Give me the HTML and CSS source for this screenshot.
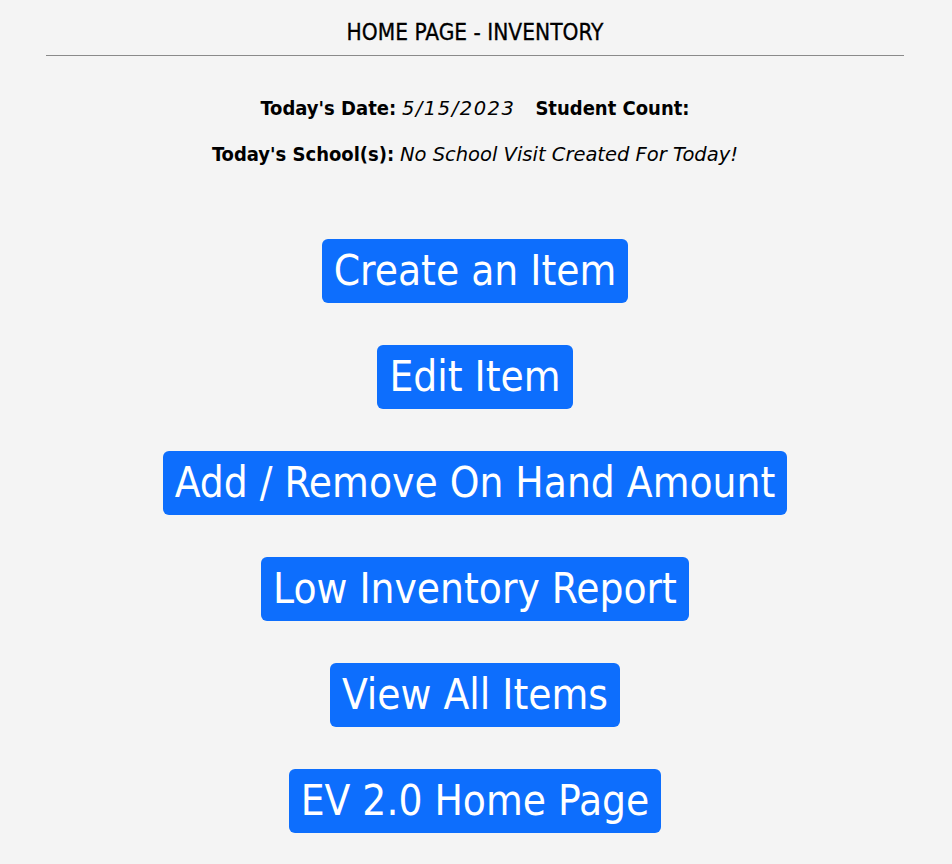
FILE: index.html
```html
<!DOCTYPE html>
<html lang="en">
<head>
<meta charset="utf-8">
<title>Home Page - Inventory</title>
<link rel="stylesheet" href="styles.css">
</head>
<body>
<main class="page">
  <header class="page-header">
    <h1 class="page-title">HOME PAGE - INVENTORY</h1>
  </header>
  <section class="info">
    <p class="info-line"><strong>Today's Date:</strong> <em class="date">5/15/2023</em><span class="spacer"></span><strong>Student Count:</strong></p>
    <p class="info-line"><strong>Today's School(s):</strong> <em>No School Visit Created For Today!</em></p>
  </section>
  <nav class="actions">
    <a class="btn" href="#">Create an Item</a>
    <a class="btn" href="#">Edit Item</a>
    <a class="btn" href="#">Add / Remove On Hand Amount</a>
    <a class="btn" href="#">Low Inventory Report</a>
    <a class="btn" href="#">View All Items</a>
    <a class="btn" href="#">EV 2.0 Home Page</a>
  </nav>
</main>
</body>
</html>
```

FILE: styles.css
```css
html, body {
  margin: 0;
  padding: 0;
  background: #f4f4f4;
}
body {
  font-family: "DejaVu Sans Condensed", "Liberation Sans", sans-serif;
  color: #000;
}
.page {
  margin: 0 48px 0 46px;
  display: flex;
  flex-direction: column;
  align-items: center;
}
.page-header {
  width: 100%;
  border-bottom: 1px solid #8a8a8a;
  padding-top: 20px;
  padding-bottom: 11px;
  text-align: center;
}
.page-title {
  margin: 0;
  font-size: 22.5px;
  font-weight: normal;
  line-height: 24px;
  -webkit-text-stroke: 0.3px #000;
}
.info {
  margin-top: 39px;
  text-align: center;
}
.info-line {
  margin: 0 0 19px;
  font-size: 20px;
  line-height: 26px;
}
.info-line strong { font-weight: bold; }
.info-line em {
  font-family: "DejaVu Sans", sans-serif;
  font-style: italic;
  font-size: 19.5px;
}
.info-line .date { letter-spacing: 1.5px; }
.spacer { display: inline-block; width: 20px; }
.actions {
  margin-top: 52px;
  display: flex;
  flex-direction: column;
  align-items: center;
  gap: 42px;
}
.btn {
  display: inline-block;
  background: #0d6efd;
  color: #fff;
  text-decoration: none;
  font-size: 42px;
  line-height: 48px;
  padding: 8px 12px;
  border-radius: 6px;
}
```
